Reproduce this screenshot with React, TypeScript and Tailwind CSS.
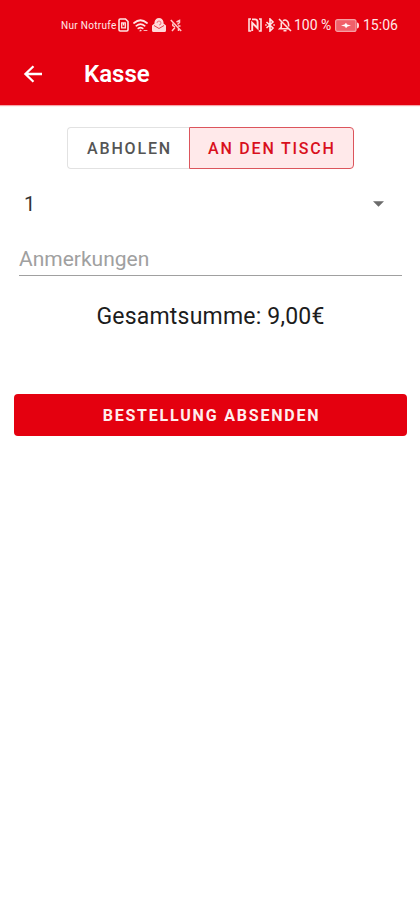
import React from "react";

function SimIcon() {
  return (
    <svg className="ml-px h-[14px] w-[11px] shrink-0" viewBox="0 0 11 14" fill="none" stroke="#ffe4e4">
      <path d="M1 2.2Q1 1 2.2 1H7.5L10 3.5V11.8Q10 13 8.8 13H2.2Q1 13 1 11.8Z" strokeWidth="1.6" />
      <path d="M3.7 4.8V9.8H7.3V4.8ZM5.5 4.5V7.5" strokeWidth="1.3" />
    </svg>
  );
}

function WifiIcon() {
  return (
    <svg className="ml-1 h-[13px] w-[15px] shrink-0" viewBox="0 0 15 13" fill="none" stroke="#ffe4e4" strokeLinecap="round">
      <path d="M1 4Q7.5-1.5 14 4M3.3 6.8Q7.5 3.3 11.7 6.8M5.3 9.4Q7.5 7.7 9.7 9.4" strokeWidth="1.7" />
      <path d="M7 11.5L7.5 11L8 11.5Z" fill="#ffe4e4" />
      <path d="M11 11.5H14" strokeWidth="0.8" />
    </svg>
  );
}

function MailIcon() {
  return (
    <svg className="ml-1 h-[14px] w-[14px] shrink-0" viewBox="0 0 14 14">
      <path d="M0 7.5L2.5 5.5V4Q3.5 0 7 0T11.5 4V5.5L14 7.5V12.5Q14 14 12.5 14H1.5Q0 14 0 12.5Z" fill="#ffd9d9" />
      <path d="M2 7.5L7 10.5L12 7.5" fill="none" stroke="#ea3a45" strokeWidth="1" />
      <path d="M5 5Q5 3 7 3T9 5T7 7" fill="none" stroke="#f0707a" strokeWidth="1" />
    </svg>
  );
}

function NoSignalIcon() {
  return (
    <svg className="ml-1 h-[13px] w-3 shrink-0" viewBox="0 0 12 13" fill="none" stroke="#ffc8c8">
      <path d="M.8 1L11.2 12" strokeWidth="1.5" />
      <path d="M2 12L5 8.5M2.8 4.5V6.5L5 8M6.5 3L9.5 1.5V3.5L7.5 5.5M8 7H10.5M8.5 9.5V12" strokeWidth="1.5" />
    </svg>
  );
}

function NfcIcon() {
  return (
    <svg className="h-[14px] w-[14px] shrink-0" viewBox="0 0 14 14" fill="none" stroke="#ffe0e0">
      <path d="M3 1H1V13H3.2M10.8 13H13V1H11" strokeWidth="1.6" />
      <path d="M4.2 13V4.8L9.6 10.2V4.2Q9.6 1.4 7 1.4H4" strokeWidth="1.9" />
    </svg>
  );
}

function BluetoothIcon() {
  return (
    <svg className="ml-[3px] h-[14px] w-[10px] shrink-0" viewBox="0 0 10 14" fill="none" stroke="#ffe4e4" strokeWidth="1.6">
      <path d="M1.5 4L8 10L5 13V1L8 4L1.5 10M.2 7H1.7M8.3 7H9.8" />
    </svg>
  );
}

function BellOffIcon() {
  return (
    <svg className="ml-[3px] h-[14px] w-[14px] shrink-0" viewBox="0 0 14 14" fill="none" stroke="#ffdcdc" strokeWidth="1.6">
      <path d="M1 1L13 13M3.3 4.5V9.2L1.8 10.7H10.5M5 2.8Q7 1.3 9 2.8Q10.7 4 10.7 8.5M5.5 12.8H8.5" />
    </svg>
  );
}

function BatteryIcon() {
  return (
    <svg className="h-[13px] w-6 shrink-0" viewBox="0 0 24 13">
      <rect x=".6" y=".6" width="20.4" height="11.8" rx="2" fill="#f0606a" stroke="#f6a0a4" strokeWidth="1.2" />
      <path d="M22 3.5Q24 3.5 24 6.5T22 9.5Z" fill="#ffd5d5" />
      <path d="M6 6.5L9.5 5.5L11 3.8L12 5.5L16 6.5L12.5 7.5L11 9.2L10 7.5Z" fill="#fff" />
    </svg>
  );
}

export default function App() {
  return (
    <div className="min-h-[900px] w-[420px] bg-white font-['Roboto',sans-serif]">
      <header className="h-[105px] bg-[#e4000f] text-white shadow-[0_1px_1px_#f5a5a9]">
        <div className="flex h-[50px] items-center pl-[61px] text-[#ffe9e9]">
          <span className="w-[56px] shrink-0 whitespace-nowrap text-[10px] tracking-[0.3px]">Nur Notrufe</span>
          <SimIcon />
          <WifiIcon />
          <MailIcon />
          <NoSignalIcon />
          <div className="ml-[66px] flex items-center">
            <NfcIcon />
            <BluetoothIcon />
            <BellOffIcon />
            <span className="ml-[2px] w-[41px] shrink-0 whitespace-nowrap text-[14px]">100 %</span>
            <BatteryIcon />
            <span className="ml-1 whitespace-nowrap text-[14px]">15:06</span>
          </div>
        </div>
        <div className="flex h-[47px] items-center pl-[23px]">
          <svg className="h-[18px] w-5" viewBox="0 0 20 19" fill="none" stroke="white" strokeWidth="2.4">
            <path d="M10.5 1.3L2 9.5L10.5 17.7M2 9.5H19.5" />
          </svg>
          <h1 className="ml-[41px] text-[24px] font-semibold leading-7">Kasse</h1>
        </div>
      </header>

      <main>
        <div className="ml-[67px] mt-[22px] flex h-[42px] w-[287px] text-[16px] font-medium">
          <button className="w-[122px] rounded-l-[4px] border border-r-0 border-[#e2e2e2] pl-[19px] pt-[2px] text-left tracking-[1.85px] text-[#555]">
            ABHOLEN
          </button>
          <button className="w-[165px] whitespace-nowrap rounded-r-[4px] border border-[#dc555c] bg-[#ffe9ea] pl-[18px] pt-[2px] text-left tracking-[1.8px] text-[#d9101c]">
            AN DEN TISCH
          </button>
        </div>

        <div className="flex h-[70px] items-center justify-between pl-6 pr-9 text-[20px] text-[#333]">
          <span>1</span>
          <svg className="h-[6px] w-[11px]" viewBox="0 0 12 6" fill="#6b6b6b">
            <path d="M0 0H12L6 6Z" />
          </svg>
        </div>

        <div className="ml-[19px] flex h-[37px] w-[383px] items-center border-b border-[#a0a0a0] pt-[6px] text-[21px] text-[#a0a0a0]">
          Anmerkungen
        </div>

        <p className="mt-[26px] pl-px text-center text-[23px] leading-[30px] tracking-[0.2px] text-[#1c1c1c]">
          Gesamtsumme: 9,00€
        </p>

        <button className="ml-[14px] mt-[62px] flex h-[42px] w-[393px] items-center justify-center rounded-[4px] bg-[#e4000f] pl-[2px] pt-px text-[16px] font-bold tracking-[1.8px] text-[#ffeded]">
          BESTELLUNG ABSENDEN
        </button>
      </main>
    </div>
  );
}
